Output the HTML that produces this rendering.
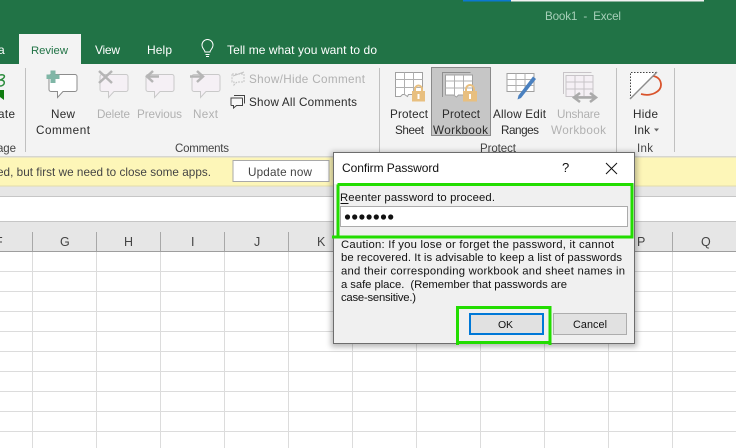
<!DOCTYPE html>
<html><head><meta charset="utf-8"><style>
html,body{margin:0;padding:0;background:#fff;width:736px;height:448px;overflow:hidden}
svg{display:block}
text{font-family:"Liberation Sans",sans-serif;font-size:11.7px;fill:#2b2b2b;white-space:pre}
.d{fill:#b1b1b1}
.w{fill:#fff;font-size:12px}
.k{font-size:11.3px;fill:#111}
.g{fill:#444;font-size:11.5px}
.h{fill:#444;font-size:12.5px}
</style></head><body>
<svg width="736" height="448" viewBox="0 0 736 448" xmlns="http://www.w3.org/2000/svg">
<defs><filter id="s" x="-10%" y="-10%" width="120%" height="120%"><feGaussianBlur stdDeviation="3"/></filter></defs>
<!-- title -->
<rect width="736" height="64" fill="#217346"/>
<rect x="463" width="48" height="1.500" fill="#0b78d0"/><rect x="511" width="193" height="1.500" fill="#f2f2f2"/>
<text x="545" y="20" textLength="76" style="fill:#a6cfb8">Book1  -  Excel</text>
<rect x="19" y="34" width="62" height="30" fill="#f3f3f3"/>
<text x="-2" y="54" class="w" textLength="6">a</text>
<text x="31" y="54" textLength="37" style="fill:#217346;font-size:11.3px">Review</text>
<text x="95" y="54" class="w" textLength="25">View</text>
<text x="147" y="54" class="w" textLength="25">Help</text>
<text x="227" y="54" class="w" textLength="150">Tell me what you want to do</text>
<path d="M205 52c0-2-3-3.500-3-7a5.500 5.500 0 0 1 11 0c0 3.500-3 5-3 7zM205.500 54.500h4M206 56.500h3" fill="none" stroke="#fff" stroke-width="1"/>
<!-- ribbon -->
<rect y="64" width="736" height="92" fill="#f3f3f3"/>
<rect y="156" width="736" height="1.500" fill="#d6d6d0"/>
<g fill="#c0c0c0"><rect x="25" y="68" width="1" height="84"/><rect x="379" y="68" width="1" height="84"/><rect x="616" y="68" width="1" height="84"/><rect x="674" y="68" width="1" height="84"/></g>
<path d="M0 75c4-1 5 1 4 2.500S0 80 0 80c3 0 5 1 4 4-1 1.500-3 2-4 2" fill="none" stroke="#2b8c3c" stroke-width="1.500"/>
<path d="M0 90h4v10l-4-3z" fill="#107c10"/>
<text x="-2" y="118" textLength="17">ate</text>
<text x="-3" y="152" class="g" textLength="19">age</text>
<!-- comment icons -->
<path d="M51 74.500h24a2 2 0 0 1 2 2v13a2 2 0 0 1-2 2H63l-5.500 6v-6H51a2 2 0 0 1-2-2v-13a2 2 0 0 1 2-2z" fill="#fff" stroke="#8c8c8c" stroke-width="1"/>
<path d="M50.500 71h5v4h4v4.500h-4v4h-5v-4h-4V75h4z" fill="#7fb6a6" transform="translate(0 -.5)"/>
<g fill="#f5f0f5" stroke="#c9c9c9" stroke-width="1">
<path d="M102 74.500h24a2 2 0 0 1 2 2v13a2 2 0 0 1-2 2h-12l-5.500 6v-6H102a2 2 0 0 1-2-2v-13a2 2 0 0 1 2-2z"/>
<path d="M148 74.500h24a2 2 0 0 1 2 2v13a2 2 0 0 1-2 2h-12l-5.500 6v-6H148a2 2 0 0 1-2-2v-13a2 2 0 0 1 2-2z"/>
<path d="M194 74.500h24a2 2 0 0 1 2 2v13a2 2 0 0 1-2 2h-12l-5.500 6v-6H194a2 2 0 0 1-2-2v-13a2 2 0 0 1 2-2z"/>
</g>
<path d="M99 71l13 12M112 71l-13 12" stroke="#b5b5b5" stroke-width="2.500" fill="none"/>
<path d="M159 76.500h-11M153 71l-6 5.500 6 5.500" stroke="#b5b5b5" stroke-width="2.500" fill="none"/>
<path d="M190 76.500h12M197 71l6 5.500-6 5.500" stroke="#b5b5b5" stroke-width="2.500" fill="none"/>
<text x="51" y="118" textLength="24">New</text>
<text x="36" y="134" textLength="54">Comment</text>
<text x="97" y="118" class="d" textLength="33">Delete</text>
<text x="137" y="118" class="d" textLength="45">Previous</text>
<text x="193" y="118" class="d" textLength="25">Next</text>
<path d="M232 74h12v8h-7l-3 3v-3h-2z" fill="none" stroke="#c4c4c4" stroke-dasharray="2 1"/>
<path d="M233 76l11-4" stroke="#c4c4c4"/>
<path d="M234 95.500h10.500v8M232 98h10a.5.500 0 0 1 .5.500v7h-6l-3 2.500v-2.500h-2a.5.500 0 0 1-.5-.5v-7z" fill="#f8f8f8" stroke="#444"/>
<text x="249" y="83" class="d" textLength="116">Show/Hide Comment</text>
<text x="249" y="106" textLength="108">Show All Comments</text>
<text x="175" y="152" class="g" textLength="54">Comments</text>
<!-- protect -->
<rect x="431.500" y="67.500" width="59" height="68" fill="#c6c6c6" stroke="#8a8a8a"/>
<g fill="#fff" stroke="#a0a0a0">
<path d="M395.500 72.500h27v22h-14l-1 2-3-2h-2l-2 2h-5z"/>
<path d="M445.500 75h27v20h-14l-2 2-3-2h-8z"/>
<path d="M507 73.500h27v18h-27z"/>
</g>
<path d="M395.500 79.500h27M395.500 87.500h27M404.500 72.500v22M413.500 72.500v22M445.500 81h27M445.500 88h27M454.500 75v20M463.500 75v20M507 79.500h27M507 85.500h27M516 73.500v18M525 73.500v18" stroke="#b0b0b0" fill="none"/>
<path d="M442.500 97v-24.500h28" stroke="#8f8f8f" fill="none"/>
<path d="M563.500 94v-21.500h28" stroke="#c8c4c8" fill="none"/>
<path d="M566 75.500h27v21h-27zM566 82h27M566 89h27M575 75.500v21M584 75.500v21" stroke="#c8c4c8" fill="#f5f0f5"/>
<path d="M575 97.500h20M580 93l-6 4.500 6 4.500M590 93l6 4.500-6 4.500" stroke="#aaa" stroke-width="2.500" fill="none"/>
<g fill="#e8bf7f"><rect x="412" y="91" width="13" height="10.500"/><rect x="463" y="91" width="14" height="10.500"/></g>
<path d="M415 91v-2a3.500 3.500 0 0 1 7 0v2M466 91v-2a4 4 0 0 1 8 0v2" stroke="#e8bf7f" stroke-width="2" fill="none"/>
<g fill="#fff"><rect x="417.500" y="94" width="2" height="5"/><rect x="469" y="94" width="2" height="5"/></g>
<path d="M536 79l-15 19-3.500 1.500 1-4 14.500-19z" fill="#4a80bf"/>
<text x="390" y="118" textLength="38">Protect</text>
<text x="395" y="134" textLength="29">Sheet</text>
<text x="442" y="118" textLength="38">Protect</text>
<text x="433" y="134" textLength="55">Workbook</text>
<text x="493" y="118" textLength="53">Allow Edit</text>
<text x="501" y="134" textLength="38">Ranges</text>
<text x="557" y="118" class="d" textLength="43">Unshare</text>
<text x="551" y="134" class="d" textLength="55">Workbook</text>
<text x="480" y="152" class="g" textLength="36">Protect</text>
<!-- ink -->
<path d="M630.500 99V72.500H657z" fill="#fff"/>
<path d="M630.500 99V72.500H656" fill="none" stroke="#444" stroke-dasharray="1.500 1.500"/>
<path d="M653 76c6 1 8 5 8 9 0 6-9 12-20 9" fill="none" stroke="#d9532c" stroke-width="1.800"/>
<path d="M630 99l27-27" stroke="#8c8c8c" stroke-width="1.500"/>
<text x="633" y="118" textLength="25">Hide</text>
<text x="634" y="134" textLength="16">Ink</text>
<path d="M654 128.500h5l-2.500 3z" fill="#666"/>
<text x="637" y="152" class="g" textLength="16">Ink</text>
<!-- message bar -->
<rect y="157.500" width="736" height="28.500" fill="#fdf6b8"/>
<rect y="185.500" width="736" height="1" fill="#e2dcaa"/>
<text x="-3" y="176" textLength="214" style="fill:#444">ed, but first we need to close some apps.</text>
<rect x="233" y="160.500" width="96" height="21" fill="#fff" stroke="#a9a9a9"/>
<text x="248" y="176" textLength="64" style="fill:#444">Update now</text>
<!-- formula/header -->
<rect y="186.500" width="736" height="10" fill="#e6e6e6"/>
<rect y="196" width="736" height="1" fill="#c6c6c6"/>
<rect y="221" width="736" height="1" fill="#c6c6c6"/>
<rect y="222" width="736" height="29" fill="#e6e6e6"/>
<rect y="251" width="736" height="1" fill="#9e9e9e"/>
<g stroke="#dcdcdc" fill="none">
<path d="M32.500 252V448M96.500 252V448M160.500 252V448M224.500 252V448M288.500 252V448M352.500 252V448M416.500 252V448M480.500 252V448M544.500 252V448M608.500 252V448M672.500 252V448"/>
<path d="M0 271.500H736M0 291.500H736M0 311.500H736M0 331.500H736M0 351.500H736M0 371.500H736M0 391.500H736M0 411.500H736M0 431.500H736"/>
</g>
<g stroke="#a8a8a8" fill="none"><path d="M32.500 232V251M96.500 232V251M160.500 232V251M224.500 232V251M288.500 232V251M352.500 232V251M416.500 232V251M608.500 232V251M672.500 232V251"/></g>
<text x="-5" y="246" class="h">F</text>
<text x="60" y="246" class="h">G</text>
<text x="124" y="246" class="h">H</text>
<text x="191" y="246" class="h">I</text>
<text x="254" y="246" class="h">J</text>
<text x="317" y="246" class="h">K</text>
<text x="637" y="246" class="h">P</text>
<text x="701" y="246" class="h">Q</text>
<!-- dialog -->
<rect x="331" y="152" width="306" height="195" fill="#000" opacity=".28" filter="url(#s)"/>
<rect x="333.500" y="152.500" width="301" height="191" fill="#f0f0f0" stroke="#6d6d6d"/>
<rect x="334" y="153" width="300" height="31" fill="#fff"/>
<text x="342" y="172" textLength="97" style="fill:#111;font-size:12px">Confirm Password</text>
<text x="562" y="172" style="fill:#111;font-size:13px">?</text>
<path d="M606 163l11 11M617 163l-11 11" stroke="#111" fill="none"/>
<text x="340" y="201" class="k" textLength="155">Reenter password to proceed.</text>
<rect x="340.500" y="203" width="8" height="1" fill="#111"/>
<rect x="340.500" y="206.500" width="287" height="20" fill="#fff" stroke="#ababab"/>
<g fill="#111"><circle cx="347.500" cy="217" r="2.600"/><circle cx="354.700" cy="217" r="2.600"/><circle cx="361.900" cy="217" r="2.600"/><circle cx="369.100" cy="217" r="2.600"/><circle cx="376.300" cy="217" r="2.600"/><circle cx="383.500" cy="217" r="2.600"/><circle cx="390.700" cy="217" r="2.600"/></g>
<text x="341" y="248" class="k" textLength="273">Caution: If you lose or forget the password, it cannot</text>
<text x="341" y="261" class="k" textLength="281">be recovered. It is advisable to keep a list of passwords</text>
<text x="341" y="274.500" class="k" textLength="284">and their corresponding workbook and sheet names in</text>
<text x="341" y="288" class="k" textLength="226">a safe place.  (Remember that passwords are</text>
<text x="341" y="301" class="k" textLength="75">case-sensitive.)</text>
<rect x="470" y="314" width="73" height="20" fill="#e1e1e1" stroke="#0078d7" stroke-width="2"/>
<text x="498" y="328" class="k" style="font-size:10.5px" textLength="15">OK</text>
<rect x="553.500" y="313.500" width="73" height="21" fill="#e1e1e1" stroke="#adadad"/>
<text x="573" y="328" class="k" style="font-size:10.8px" textLength="34">Cancel</text>
<!-- green highlight -->
<g fill="none" stroke="#22dd00" stroke-width="3">
<path d="M337.500 184.500H632V237H332M338 184.500V237"/>
<path d="M457.500 345V307.500H550V345M456 342.500H550"/>
</g>
</svg>
</body></html>
